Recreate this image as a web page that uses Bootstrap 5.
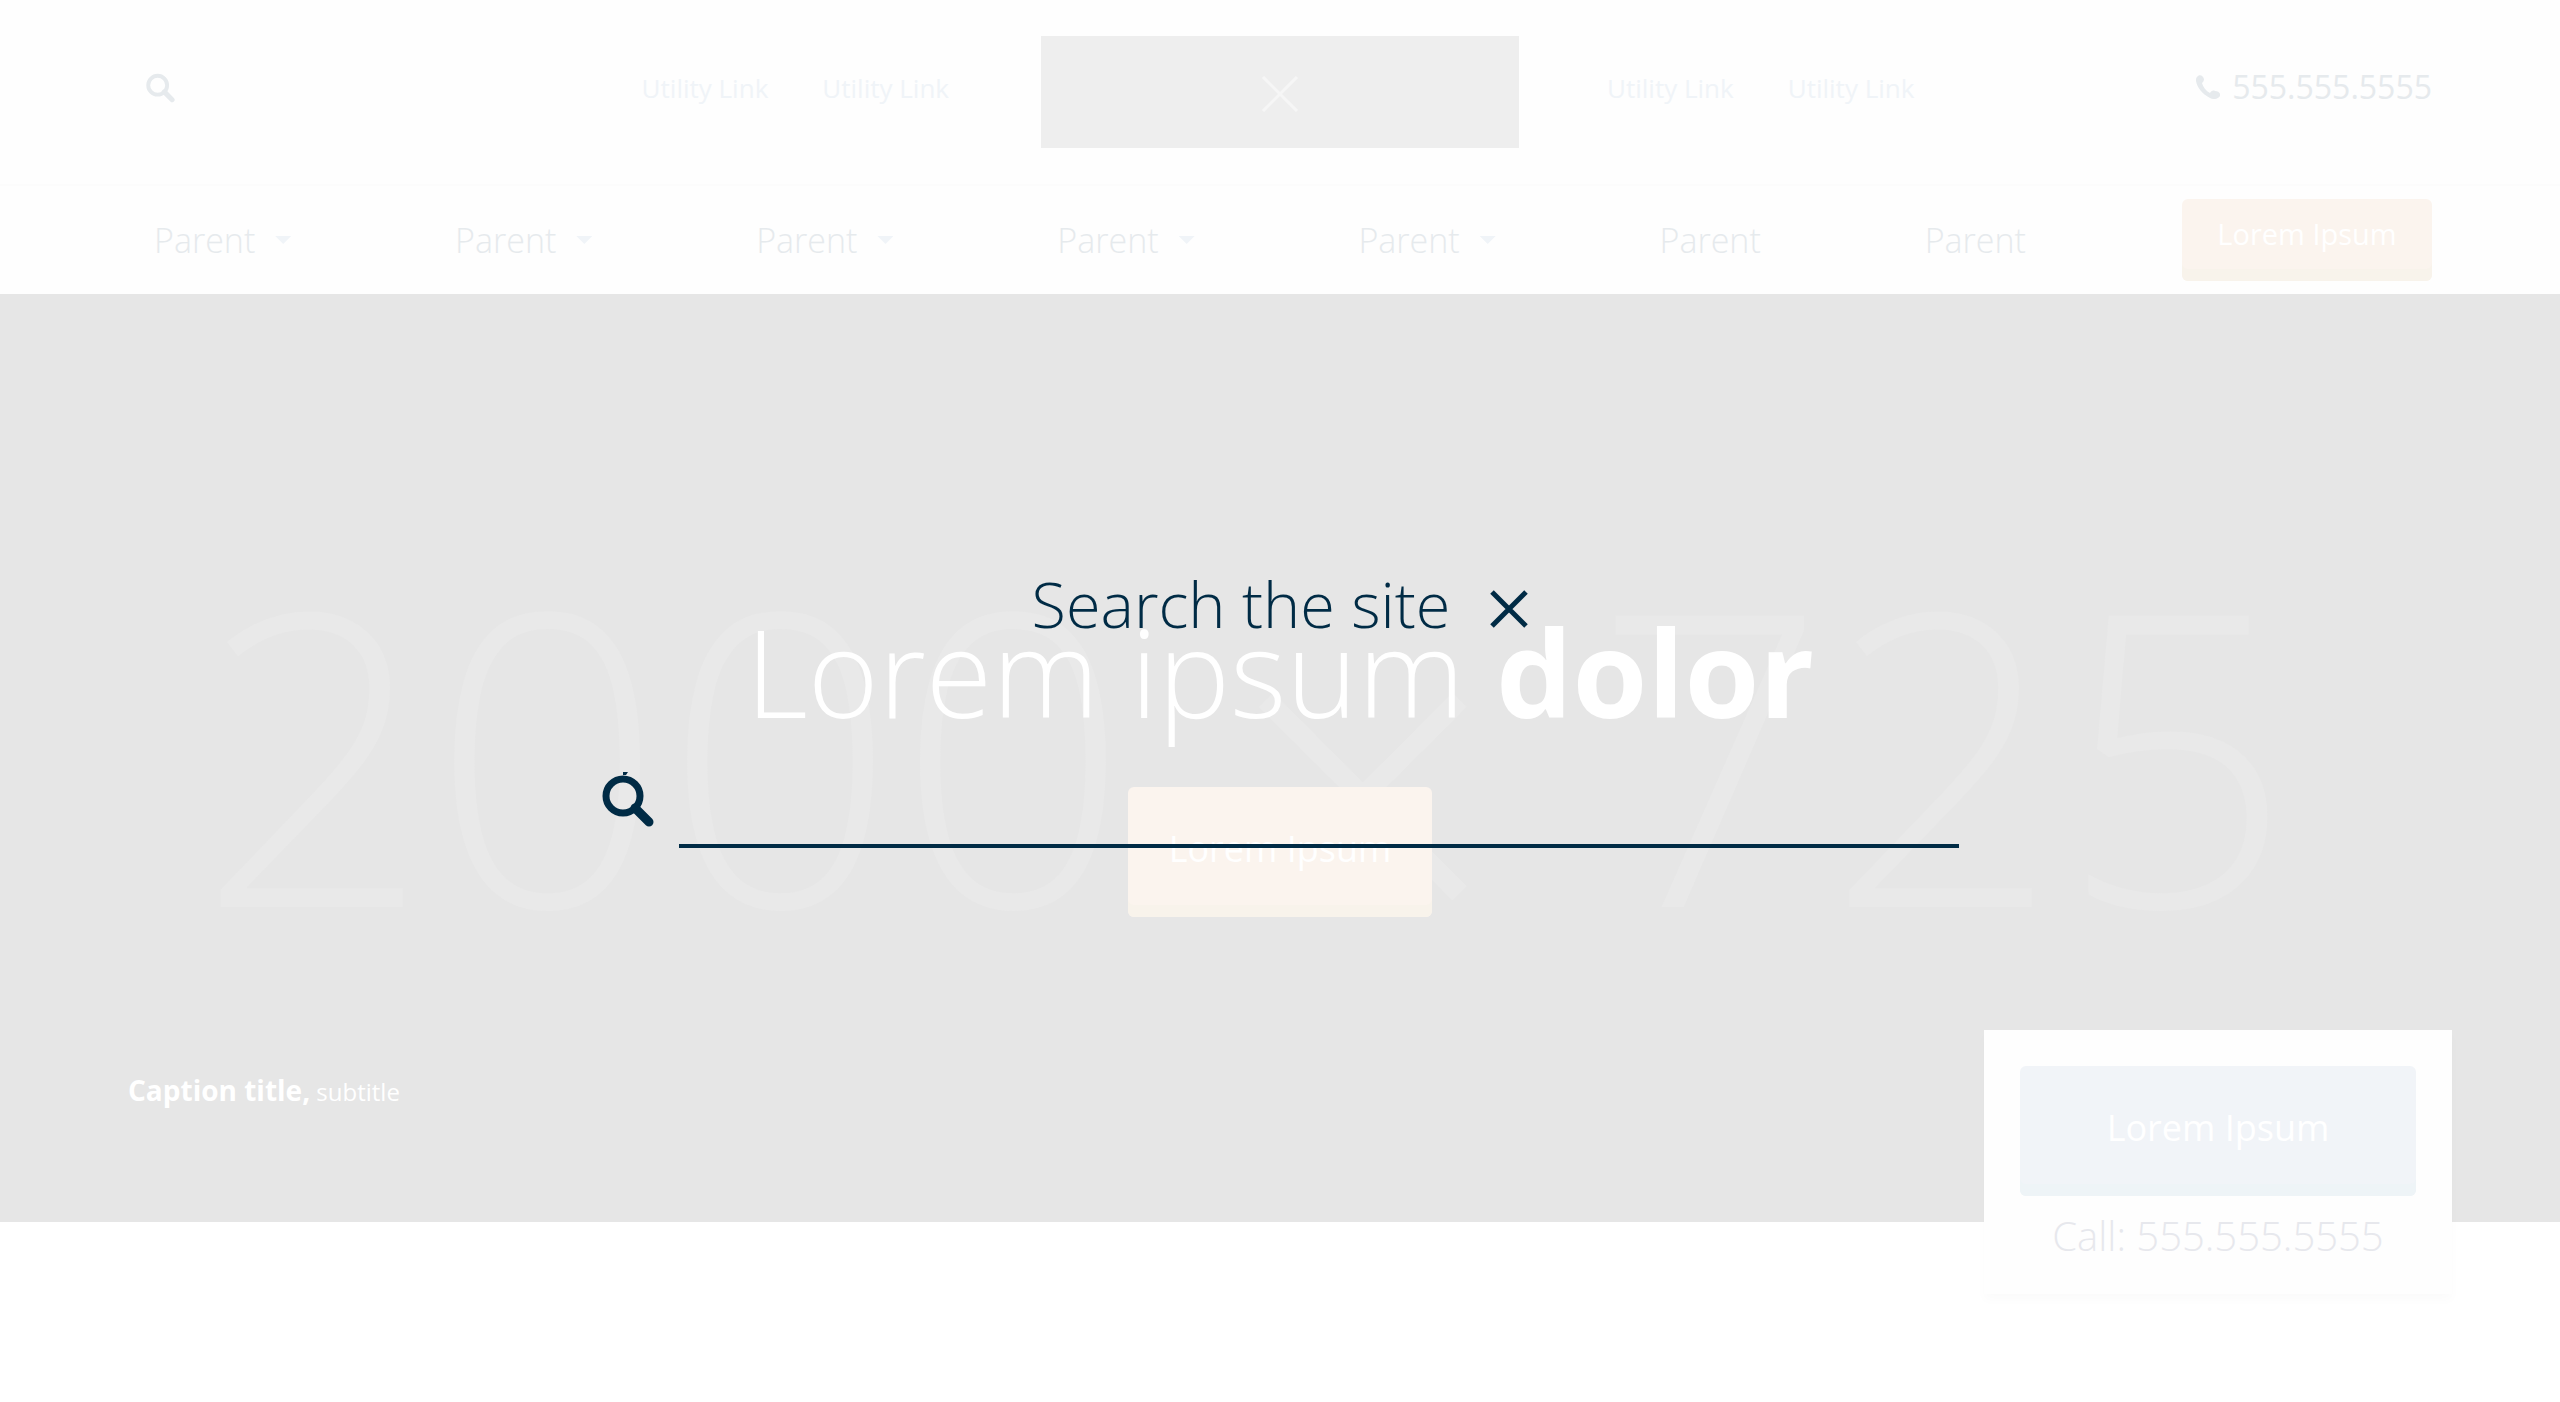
<!DOCTYPE html>
<html lang="en">
<head>
<meta charset="utf-8">
<meta name="viewport" content="width=device-width, initial-scale=1">
<title>Search the site</title>
<link rel="stylesheet" href="https://cdn.jsdelivr.net/npm/bootstrap@5.3.0/dist/css/bootstrap.min.css">
<style>
  :root { --ink: #002b45; --faint: #e6eaed; --link: #f0f4f8; --edge: 5%; }
  body { font-family: "Open Sans", "Noto Sans", sans-serif; background: #fff; }
  a { text-decoration: none; }
  strong { font-weight: 700; }
  .plain-btn { border: 0; background: none; padding: 0; color: inherit; display: flex; }
  .site-header { background: #fefefe; }
  .edge { padding-left: var(--edge); padding-right: var(--edge); }
  .top-bar { display: grid; grid-template-columns: 1fr auto 1fr; padding-top: 36px; padding-bottom: 36px; border-bottom: 2px solid #fcfcfc; }
  .side { height: 112px; padding-bottom: 8px; }
  .side-left { padding-left: 18px; padding-right: 92px; }
  .side-right { padding-left: 88px; }
  .util-links { gap: 54px; font-size: 26px; line-height: 36px; }
  .util-links a { color: var(--link); }
  .open-search { color: var(--faint); }
  .logo-box { width: 478px; height: 112px; background: #eee; color: #f6f6f6; padding-top: 4px; }
  .phone-link { gap: 12px; color: var(--faint); font-size: 32px; line-height: 40px; padding-bottom: 2px; }
  .main-nav { height: 108px; }
  .nav-items { padding-left: 26px; padding-right: 156px; }
  .nav-items a { gap: 20px; font-size: 34px; font-weight: 300; line-height: 48px; color: var(--faint); }
  .tri { width: 16px; height: 8px; background: var(--link); clip-path: polygon(0 0, 100% 0, 50% 100%); }
  .soft-btn { --bs-btn-color: #fff; --bs-btn-hover-color: #fff; --bs-btn-border-width: 0; border-radius: 6px; --bs-btn-bg: #fbf4ee; --bs-btn-hover-bg: #fbf4ee; box-shadow: inset 0 -12px 0 #f8f3eb; }
  .nav-btn { width: 250px; height: 82px; font-size: 29px; padding: 0 0 12px; }
  .big-btn { height: 130px; font-size: 36px; padding: 0 0 6px; }
  .hero-btn { width: 304px; }
  .hero { aspect-ratio: 2000 / 725; background: #e6e6e6; }
  .hero-art { font-weight: 300; font-size: 408px; fill: #e9e9e9; }
  .hero-art .times { font-size: 480px; }
  .hero-copy { color: #fff; }
  .hero-copy h1 { font-size: 121px; line-height: 144px; font-weight: 300; margin-bottom: 44px; }
  .caption { left: var(--edge); bottom: 110px; color: #fff; line-height: 40px; font-size: 24px; }
  .caption strong { font-size: 28px; }
  .call-card { right: 108px; top: 736px; width: 468px; padding: 36px 36px 30px; background: #fefefe; box-shadow: 0 6px 10px rgba(0,0,0,.02); }
  .call-card .soft-btn { --bs-btn-bg: #f1f4f8; --bs-btn-hover-bg: #f1f4f8; box-shadow: inset 0 -12px 0 #eef4f7; }
  .call-card p { font-size: 40px; line-height: 56px; font-weight: 300; color: #e7e8ed; margin-top: 12px; }
  .search-layer { color: var(--ink); padding-top: 554px; }
  .search-title { font-size: 63px; line-height: 100px; font-weight: 300; gap: 40px; }
  .search-title button { padding-top: 10px; }
  .search-form { gap: 24px; margin-top: 118px; }
  .search-form input { width: 50vw; height: 76px; background: transparent; border: 0; border-bottom: 4px solid var(--ink); border-radius: 0; font-size: 48px; box-shadow: none; }
  .search-form input:focus { background: transparent; border-color: var(--ink); box-shadow: none; }
</style>
</head>
<body>
<div class="position-relative min-vh-100">
<header class="site-header">
  <div class="top-bar edge">
    <div class="side side-left d-flex align-items-center justify-content-between">
      <button class="plain-btn open-search" type="button" aria-label="Open search">
        <svg width="30" height="30" viewBox="0 0 54 54" aria-hidden="true"><circle cx="21" cy="22" r="17" fill="none" stroke="currentColor" stroke-width="7"/><path d="M33 34L47 48" stroke="currentColor" stroke-width="9" stroke-linecap="round"/></svg>
      </button>
      <nav class="util-links d-flex" aria-label="Utility left"><a href="#">Utility Link</a><a href="#">Utility Link</a></nav>
    </div>
    <div class="logo-box d-flex align-items-center justify-content-center">
      <svg width="38" height="38" viewBox="0 0 38 38" aria-hidden="true"><path d="M2 2L36 36M36 2L2 36" stroke="currentColor" stroke-width="3"/></svg>
    </div>
    <div class="side side-right d-flex align-items-center justify-content-between">
      <nav class="util-links d-flex" aria-label="Utility right"><a href="#">Utility Link</a><a href="#">Utility Link</a></nav>
      <a class="phone-link d-flex align-items-center" href="tel:5555555555">
        <svg width="24" height="24" viewBox="0 0 24 24" fill="currentColor" aria-hidden="true"><path d="M1 2C3-1 7 0 8 4c0 2-1 3-2 4 1 4 4 8 8 10 1-2 3-3 5-2 4 0 6 3 5 5-2 3-6 4-10 2C6 19 1 12 0 6 0 4 0 3 1 2z"/></svg>
        <span>555.555.5555</span>
      </a>
    </div>
  </div>
  <div class="main-nav edge d-flex align-items-center justify-content-between">
    <nav class="nav-items d-flex flex-grow-1 justify-content-between" aria-label="Main">
      <a class="d-flex align-items-center" href="#">Parent<span class="tri"></span></a>
      <a class="d-flex align-items-center" href="#">Parent<span class="tri"></span></a>
      <a class="d-flex align-items-center" href="#">Parent<span class="tri"></span></a>
      <a class="d-flex align-items-center" href="#">Parent<span class="tri"></span></a>
      <a class="d-flex align-items-center" href="#">Parent<span class="tri"></span></a>
      <a class="d-flex align-items-center" href="#">Parent</a>
      <a class="d-flex align-items-center" href="#">Parent</a>
    </nav>
    <button class="btn soft-btn nav-btn" type="button">Lorem Ipsum</button>
  </div>
</header>
<main>
  <section class="hero position-relative">
    <svg class="hero-art position-absolute top-0 start-0 w-100 h-100" viewBox="0 0 2560 928" aria-hidden="true">
      <text x="198" y="613">2000</text><text class="times" x="1363" y="672" text-anchor="middle">×</text><text x="1594" y="613">725</text>
    </svg>
    <div class="hero-copy position-relative h-100 d-flex flex-column align-items-center justify-content-center">
      <h1>Lorem ipsum <strong>dolor</strong></h1>
      <button class="btn soft-btn big-btn hero-btn" type="button">Lorem Ipsum</button>
    </div>
    <p class="caption position-absolute mb-0"><strong>Caption title,</strong> subtitle</p>
    <aside class="call-card position-absolute">
      <button class="btn soft-btn big-btn w-100" type="button">Lorem Ipsum</button>
      <p class="text-center mb-0">Call: 555.555.5555</p>
    </aside>
  </section>
</main>
<div class="search-layer position-absolute top-0 start-0 w-100 d-flex flex-column align-items-center" role="dialog" aria-label="Search the site">
  <div class="search-title d-flex align-items-center">
    <label for="q">Search the site</label>
    <button class="plain-btn" type="button" aria-label="Close">
      <svg width="38" height="38" viewBox="0 0 38 38" aria-hidden="true"><path d="M2 2L36 36M36 2L2 36" stroke="currentColor" stroke-width="5"/></svg>
    </button>
  </div>
  <form class="search-form d-flex align-items-start">
    <button class="plain-btn" type="submit" aria-label="Search">
      <svg width="54" height="56" viewBox="0 0 54 56" aria-hidden="true"><path d="M22 0h5l-2 3h-3z" fill="currentColor"/><circle cx="22" cy="24" r="17" fill="none" stroke="currentColor" stroke-width="7"/><path d="M34 36L48 50" stroke="currentColor" stroke-width="9" stroke-linecap="round"/></svg>
    </button>
    <input class="form-control" id="q" type="text">
  </form>
</div>
</div>
<script src="https://cdn.jsdelivr.net/npm/bootstrap@5.3.0/dist/js/bootstrap.bundle.min.js"></script>
</body>
</html>
